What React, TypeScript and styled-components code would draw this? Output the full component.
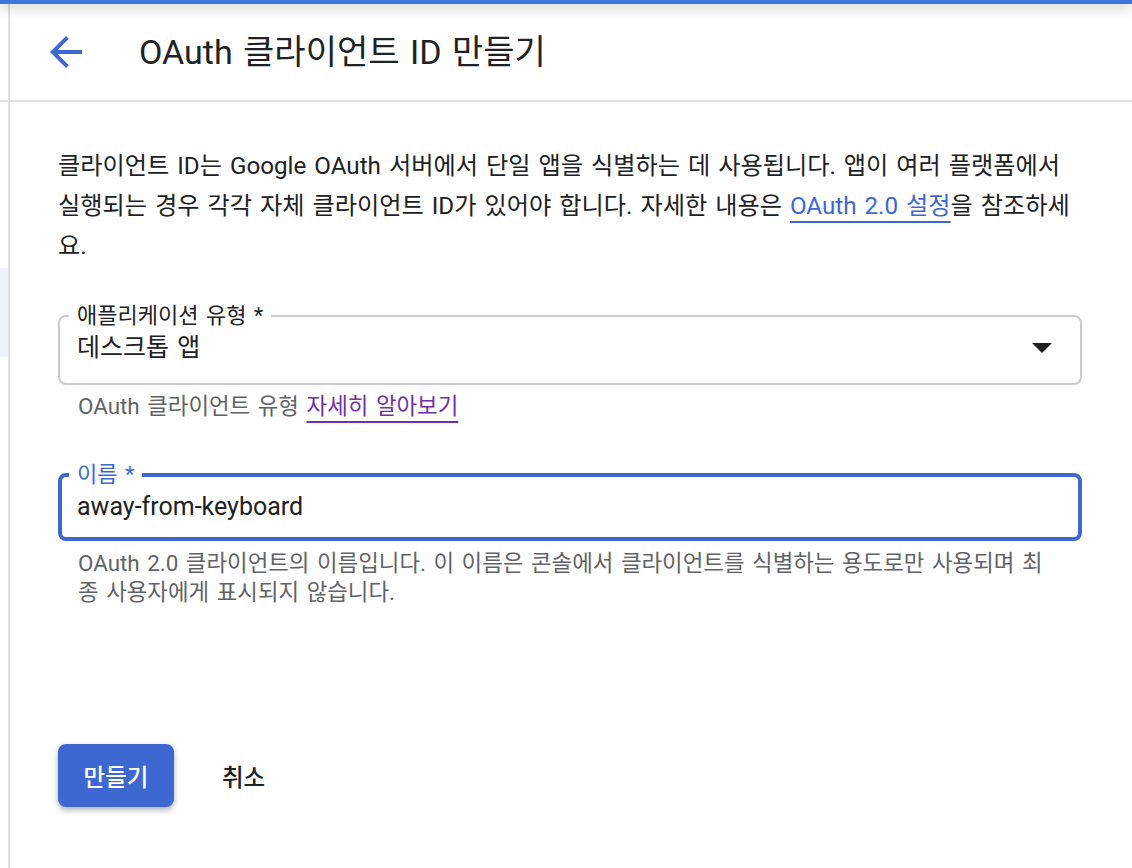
import React from "react";
import styled, { createGlobalStyle } from "styled-components";

const GlobalStyle = createGlobalStyle`
  html, body { margin: 0; padding: 0; background: #ffffff; }
  body {
    font-family: Roboto, "Noto Sans CJK KR", sans-serif;
    color: #202124;
    word-spacing: 2px;
    -webkit-font-smoothing: antialiased;
  }
  * { box-sizing: border-box; }
`;

const Page = styled.div`
  display: flex;
  flex-direction: column;
  height: 868px;
  overflow: hidden;
`;

const TopBar = styled.div`
  flex: none;
  height: 4px;
  background: #3a76dc;
  position: relative;
  z-index: 2;
  box-shadow: 0 3px 12px rgba(0, 0, 0, 0.35);
`;

const Body = styled.div`
  flex: 1;
  display: flex;
  min-height: 0;
`;

const Rail = styled.nav`
  flex: none;
  width: 10px;
  border-right: 2px solid #e0e0e0;
  display: flex;
  flex-direction: column;
`;

const RailHead = styled.div`
  flex: none;
  height: 98px;
  border-bottom: 2px solid #e0e0e0;
`;

const RailItem = styled.div<{ $active?: boolean }>`
  flex: none;
  height: 89px;
  margin-top: 166px;
  background: ${(p) => (p.$active ? "#eef2fc" : "transparent")};
`;

const Main = styled.main`
  flex: 1;
  display: flex;
  flex-direction: column;
  min-width: 0;
`;

const Header = styled.header`
  flex: none;
  height: 98px;
  border-bottom: 2px solid #e0e0e0;
  display: flex;
  align-items: center;
  padding-left: 32px;
`;

const BackButton = styled.button`
  width: 48px;
  height: 48px;
  padding: 0;
  border: 0;
  background: none;
  color: #3e68d1;
  display: flex;
  align-items: center;
  justify-content: center;
  cursor: pointer;
  svg { width: 48px; height: 48px; display: block; }
`;

const Title = styled.h1`
  margin: 0 0 0 49px;
  font-size: 34px;
  font-weight: 400;
  line-height: 44px;
  color: #202124;
`;

const Content = styled.section`
  padding: 44px 40px 0 48px;
  display: flex;
  flex-direction: column;
`;

const Intro = styled.p`
  margin: 0;
  font-size: 24.2px;
  line-height: 40px;
  color: #202124;
  white-space: nowrap;
`;

const Link = styled.a<{ $visited?: boolean }>`
  color: ${(p) => (p.$visited ? "#7130a6" : "#3e68d1")};
  text-decoration: underline;
  text-decoration-thickness: 2px;
  text-underline-offset: 7px;
`;

const Field = styled.div<{ $gap: number }>`
  margin-top: ${(p) => p.$gap}px;
  margin-right: 10px;
  display: flex;
  flex-direction: column;
`;

const Outline = styled.fieldset<{ $focused?: boolean }>`
  margin: 0;
  min-width: 0;
  border: ${(p) => (p.$focused ? "4px solid #3e68d1" : "2px solid #cbcbcb")};
  border-radius: 8px;
  padding: 0 28px 0 ${(p) => (p.$focused ? 7 : 9)}px;
`;

const Legend = styled.legend<{ $focused?: boolean }>`
  padding: 0 8px;
  font-size: 22px;
  line-height: 24px;
  color: ${(p) => (p.$focused ? "#3e68d1" : "#202124")};
`;

const ControlRow = styled.div<{ $top: number; $bottom: number }>`
  display: flex;
  align-items: center;
  padding: ${(p) => p.$top}px 0 ${(p) => p.$bottom}px 8px;
`;

const Value = styled.div`
  flex: 1;
  font-size: 25px;
  line-height: 32px;
  color: #202124;
`;

const Caret = styled.svg`
  flex: none;
  width: 20px;
  height: 10px;
  display: block;
`;

const Hint = styled.div<{ $gap: number; $lh: number }>`
  margin-top: ${(p) => p.$gap}px;
  padding: 0 0 0 20px;
  font-size: 22.4px;
  line-height: ${(p) => p.$lh}px;
  color: #5f6368;
  white-space: nowrap;
`;

const Actions = styled.div`
  margin-top: 137px;
  display: flex;
  align-items: center;
  gap: 24px;
`;

const PrimaryButton = styled.button`
  height: 63px;
  width: 116px;
  border: 0;
  border-radius: 8px;
  background: #3e68d1;
  color: #ffffff;
  font-family: inherit;
  font-size: 23.5px;
  font-weight: 500;
  box-shadow: 0 3px 6px rgba(0, 0, 0, 0.3);
  cursor: pointer;
`;

const TextButton = styled.button`
  height: 63px;
  padding: 0 24px;
  border: 0;
  background: none;
  color: #202124;
  font-family: inherit;
  font-size: 23.5px;
  font-weight: 500;
  cursor: pointer;
`;

export default function App() {
  return (
    <>
      <GlobalStyle />
      <Page>
        <TopBar />
        <Body>
          <Rail>
            <RailHead />
            <RailItem $active />
          </Rail>
          <Main>
            <Header>
              <BackButton aria-label="뒤로">
                <svg viewBox="0 0 24 24" fill="currentColor">
                  <path d="M20 11H7.83l5.59-5.59L12 4l-8 8 8 8 1.41-1.41L7.83 13H20v-2z" />
                </svg>
              </BackButton>
              <Title>OAuth 클라이언트 ID 만들기</Title>
            </Header>
            <Content>
              <Intro>
                클라이언트 ID는 Google OAuth 서버에서 단일 앱을 식별하는 데 사용됩니다. 앱이 여러 플랫폼에서
                <br />
                실행되는 경우 각각 자체 클라이언트 ID가 있어야 합니다. 자세한 내용은{" "}
                <Link href="#">OAuth 2.0 설정</Link>을 참조하세
                <br />
                요.
              </Intro>

              <Field $gap={38}>
                <Outline>
                  <Legend>애플리케이션 유형 *</Legend>
                  <ControlRow $top={4} $bottom={19}>
                    <Value>데스크톱 앱</Value>
                    <Caret viewBox="0 0 20 10">
                      <polygon points="0,0 20,0 10,10" fill="#1f1f1f" />
                    </Caret>
                  </ControlRow>
                </Outline>
                <Hint $gap={9} $lh={24}>
                  OAuth 클라이언트 유형 <Link href="#" $visited>자세히 알아보기</Link>
                </Hint>
              </Field>

              <Field $gap={45}>
                <Outline $focused>
                  <Legend $focused>이름 *</Legend>
                  <ControlRow $top={4} $bottom={14}>
                    <Value>away-from-keyboard</Value>
                  </ControlRow>
                </Outline>
                <Hint $gap={8} $lh={29}>
                  OAuth 2.0 클라이언트의 이름입니다. 이 이름은 콘솔에서 클라이언트를 식별하는 용도로만 사용되며 최
                  <br />
                  종 사용자에게 표시되지 않습니다.
                </Hint>
              </Field>

              <Actions>
                <PrimaryButton>만들기</PrimaryButton>
                <TextButton>취소</TextButton>
              </Actions>
            </Content>
          </Main>
        </Body>
      </Page>
    </>
  );
}
